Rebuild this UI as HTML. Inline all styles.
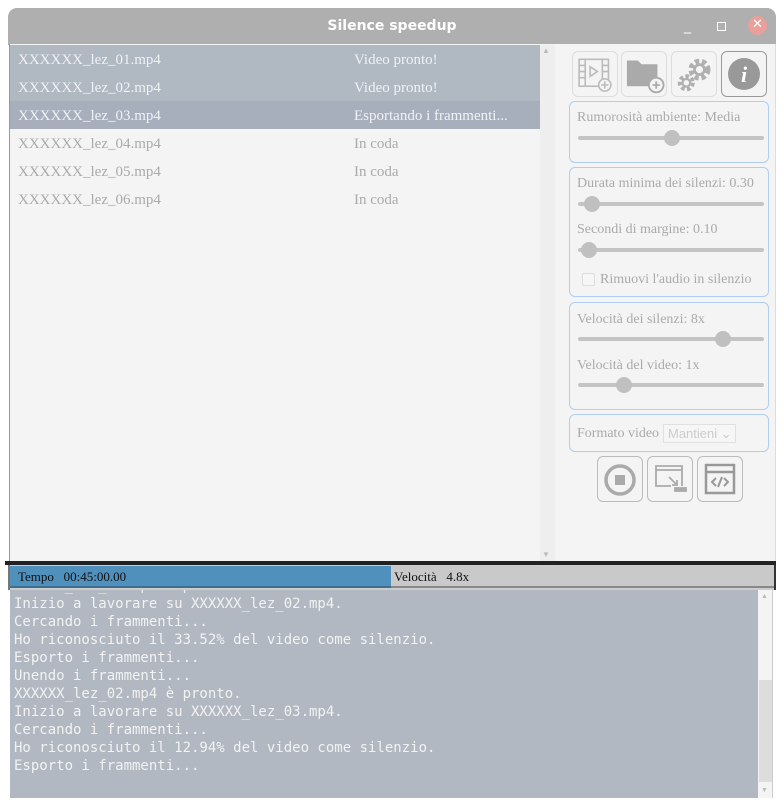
<!DOCTYPE html>
<html><head><meta charset="utf-8"><style>
*{box-sizing:border-box;margin:0;padding:0}
body{width:784px;height:805px;background:#fff;position:relative;overflow:hidden;font-family:"Liberation Serif",serif}
.abs{position:absolute}
.title{left:8px;top:8px;width:768px;height:37px;background:#afafaf;border-radius:9px 9px 0 0;color:#fff;font:bold 14px "DejaVu Sans","Liberation Sans",sans-serif;text-align:center;line-height:36px}
.body{left:9px;top:44px;width:767px;height:519px;background:#f4f4f4;border-left:1px solid #999;border-right:1px solid #ddd}
.row{position:absolute;left:10px;width:530px;height:28px;font-size:15px;line-height:30px;color:#aaa}
.row span{position:absolute}
.row .a{left:8px}.row .b{left:344px}
.btn{position:absolute;width:46px;height:46px;border:1px solid #ddd;border-radius:6px}
.grp{position:absolute;left:569px;width:200px;border:1px solid #b0cdf2;border-radius:6px}
.lbl{position:absolute;left:7px;font-size:14px;color:#aaa}
.track{position:absolute;left:8px;width:186px;height:4px;background:#c4c4c4;border-radius:2px}
.knob{position:absolute;width:16px;height:16px;border-radius:50%;background:#c0c0c0;top:-6px}
.log{left:10px;top:590px;width:748px;height:208px;background:#b1b8c2;font:14px "DejaVu Sans Mono","Liberation Mono",monospace;color:#f2f2f2;line-height:18px;padding:0 4px;overflow:hidden}
</style></head><body>
<div class="abs title">Silence speedup
<span style="position:absolute;left:676px;top:0;font-weight:normal">_</span>
<span style="position:absolute;left:709px;top:14px;width:9px;height:9px;border:1px solid #fff"></span>
<span style="position:absolute;left:740px;top:8px;width:19px;height:19px;border-radius:50%;background:#e9a09a;line-height:18px;font-weight:normal;font-size:13px">✕</span>
</div>
<div class="abs body"></div>
<div class="row" style="top:45px;background:#b0b8c2;color:#f0f2f5"><span class="a">XXXXXX_lez_01.mp4</span><span class="b">Video pronto!</span></div>
<div class="row" style="top:73px;background:#b0b8c2;color:#f0f2f5"><span class="a">XXXXXX_lez_02.mp4</span><span class="b">Video pronto!</span></div>
<div class="row" style="top:101px;background:#a8afbc;color:#f0f2f5"><span class="a">XXXXXX_lez_03.mp4</span><span class="b">Esportando i frammenti...</span></div>
<div class="row" style="top:129px"><span class="a">XXXXXX_lez_04.mp4</span><span class="b">In coda</span></div>
<div class="row" style="top:157px"><span class="a">XXXXXX_lez_05.mp4</span><span class="b">In coda</span></div>
<div class="row" style="top:185px"><span class="a">XXXXXX_lez_06.mp4</span><span class="b">In coda</span></div>
<div class="abs" style="left:540px;top:45px;width:15px;height:517px;background:#eeeeee"></div>
<div class="abs" style="left:542px;top:46px;font-size:8px;color:#bbb">▲</div>
<div class="abs" style="left:542px;top:550px;font-size:8px;color:#bbb">▼</div>

<!-- top buttons -->
<div class="btn" style="left:572px;top:51px"><svg width="44" height="44" viewBox="4 4 36 36" fill="none" stroke="#bbb" stroke-width="1.3"><rect x="9" y="10" width="24" height="22"/><line x1="14" y1="10" x2="14" y2="32"/><line x1="28" y1="10" x2="28" y2="32"/><path d="M9 15h5M9 20h5M9 25h5M28 15h5M28 20h5"/><path d="M18 16l6 4-6 4z"/><circle cx="30" cy="31" r="5" fill="#f4f4f4"/><path d="M30 28v6M27 31h6"/></svg></div>
<div class="btn" style="left:621px;top:51px"><svg width="44" height="44" viewBox="4 4 36 36"><path d="M8 11h9l3 3h13v18H8z" fill="#aaa"/><circle cx="32" cy="31" r="6" fill="#f4f4f4" stroke="#aaa" stroke-width="1.5"/><path d="M32 28v6M29 31h6" stroke="#aaa" stroke-width="1.5"/></svg></div>
<div class="btn" style="left:671px;top:51px"><svg width="44" height="44" viewBox="2 2 40 40" fill="none" stroke="#b0b0b0"><circle cx="27" cy="18" r="7" stroke-width="6" stroke-dasharray="3.5 2.3"/><circle cx="27" cy="18" r="4.5" stroke-width="2.5"/><circle cx="15" cy="30" r="5.5" stroke-width="4.5" stroke-dasharray="3 2"/><circle cx="15" cy="30" r="3.5" stroke-width="2"/></svg></div>
<div class="btn" style="left:721px;top:51px;border-color:#999"><svg width="44" height="44" viewBox="0 0 44 44"><circle cx="22" cy="22" r="16" fill="#999"/><text x="22" y="30" font-family="Liberation Serif" font-style="italic" font-weight="bold" font-size="22" fill="#fff" text-anchor="middle">i</text></svg></div>

<div class="grp" style="top:101px;height:62px"><div class="lbl" style="top:8px">Rumorosità ambiente: Media</div><div class="track" style="top:34px"><div class="knob" style="left:86px"></div></div></div>
<div class="grp" style="top:167px;height:130px"><div class="lbl" style="top:8px">Durata minima dei silenzi: 0.30</div><div class="track" style="top:34px"><div class="knob" style="left:6px"></div></div>
<div class="lbl" style="top:54px">Secondi di margine: 0.10</div><div class="track" style="top:80px"><div class="knob" style="left:3px"></div></div>
<div style="position:absolute;left:12px;top:105px;width:13px;height:13px;border:1px solid #ddd;border-radius:2px;background:#f6f6f6"></div>
<div class="lbl" style="top:104px;left:30px">Rimuovi l'audio in silenzio</div></div>
<div class="grp" style="top:302px;height:108px"><div class="lbl" style="top:9px">Velocità dei silenzi: 8x</div><div class="track" style="top:34px"><div class="knob" style="left:137px"></div></div>
<div class="lbl" style="top:55px">Velocità del video: 1x</div><div class="track" style="top:80px"><div class="knob" style="left:38px"></div></div></div>
<div class="grp" style="top:414px;height:38px"><div class="lbl" style="top:11px">Formato video</div>
<div style="position:absolute;left:93px;top:9px;width:73px;height:19px;border:1px solid #e0e0e0;background:#f6f6f6;font:13px 'Liberation Sans',sans-serif;color:#ccc;padding-left:4px;line-height:17px">Mantieni ⌄</div></div>

<div class="btn" style="left:597px;top:456px;border-color:#bbb"><svg width="44" height="44" viewBox="0 0 44 44"><circle cx="22" cy="23" r="14" fill="none" stroke="#aaa" stroke-width="3.5"/><rect x="17" y="18" width="10" height="10" fill="#aaa"/></svg></div>
<div class="btn" style="left:647px;top:456px;border-color:#bbb"><svg width="44" height="44" viewBox="0 0 44 44" fill="none" stroke="#aaa" stroke-width="1.8"><path d="M34 29V9H8v20h15"/><line x1="8" y1="13" x2="34" y2="13"/><path d="M21 20l8 8M24 28h5v-5"/><rect x="27" y="31" width="11" height="3" fill="#aaa"/></svg></div>
<div class="btn" style="left:697px;top:456px;border-color:#bbb"><svg width="44" height="44" viewBox="0 0 44 44" fill="none" stroke="#999" stroke-width="2.5"><rect x="8" y="8" width="28" height="28"/><line x1="8" y1="15" x2="36" y2="15"/><path d="M18 21l-4 4 4 4M26 21l4 4-4 4M24 20l-4 10" stroke-width="2"/></svg></div>

<div class="abs" style="left:5px;top:561px;width:771px;height:4px;background:#222"></div>
<div class="abs" style="left:8px;top:565px;width:768px;height:25px;background:#ccc;border-left:2px solid #777;border-right:2px solid #333"></div>
<div class="abs" style="left:10px;top:566px;width:381px;height:22px;background:#5090bc;border-bottom:2px solid #3f6f90;font-size:13px;line-height:22px;padding-left:8px;color:#111">Tempo&nbsp;&nbsp;&nbsp;00:45:00.00</div>
<div class="abs" style="left:391px;top:566px;width:383px;height:22px;background:#c9c9c9;font-size:13px;line-height:22px;padding-left:3px;color:#111;border-bottom:2px solid #888">Velocità&nbsp;&nbsp;&nbsp;4.8x</div>
<div class="abs log"><div style="margin-top:-13px;color:#eee">XXXXXX_lez_01.mp4 è pronto.</div>Inizio a lavorare su XXXXXX_lez_02.mp4.<br>Cercando i frammenti...<br>Ho riconosciuto il 33.52% del video come silenzio.<br>Esporto i frammenti...<br>Unendo i frammenti...<br>XXXXXX_lez_02.mp4 è pronto.<br>Inizio a lavorare su XXXXXX_lez_03.mp4.<br>Cercando i frammenti...<br>Ho riconosciuto il 12.94% del video come silenzio.<br>Esporto i frammenti...</div>
<div class="abs" style="left:758px;top:590px;width:15px;height:208px;background:#f4f4f4;border-right:1px solid #ccc"></div>
<div class="abs" style="left:759px;top:680px;width:13px;height:102px;background:#ddd"></div>
<div class="abs" style="left:761px;top:592px;font-size:7px;color:#bbb">▲</div>
<div class="abs" style="left:761px;top:786px;font-size:7px;color:#bbb">▼</div>
</body></html>
